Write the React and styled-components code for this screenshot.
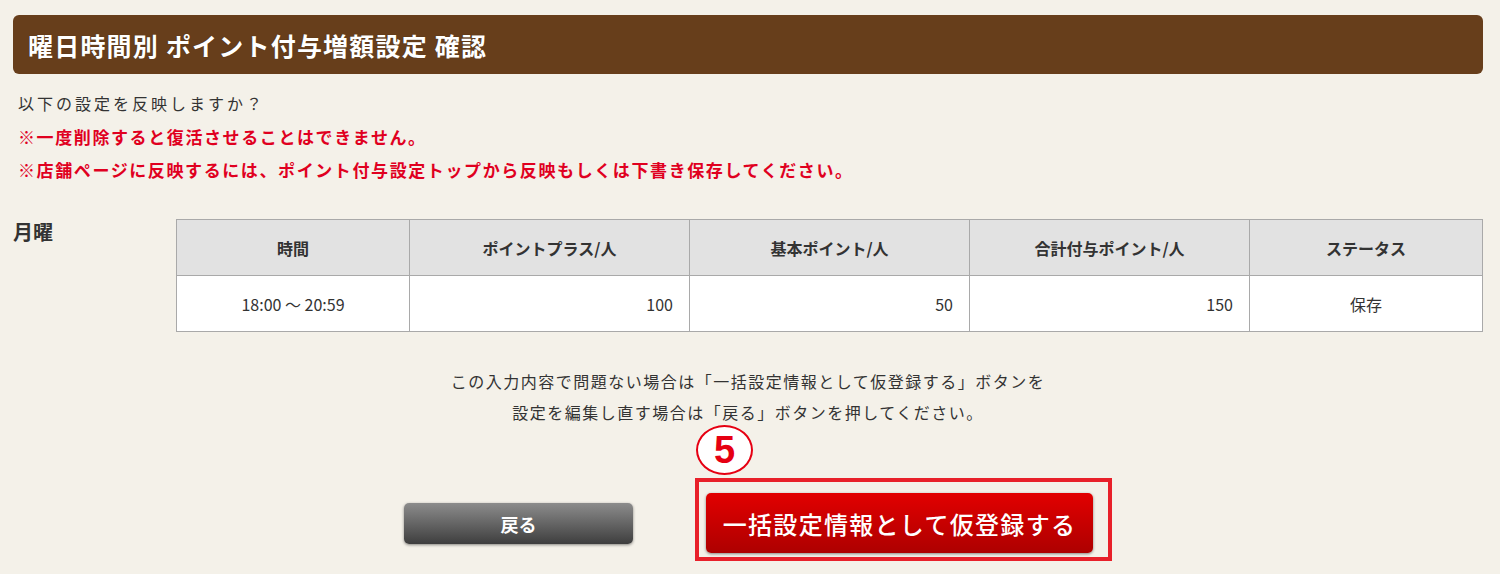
import React from "react";
import styled, { createGlobalStyle } from "styled-components";

const GlobalStyle = createGlobalStyle`
  body {
    margin: 0;
    background: #f4f1e9;
    font-family: "Noto Sans CJK JP", "Noto Sans", sans-serif;
    color: #333;
  }
`;

const Page = styled.div`
  padding: 15px 17px 0 13px;
  height: 574px;
  box-sizing: border-box;
`;

const TitleBar = styled.div`
  display: flex;
  align-items: center;
  height: 59px;
  padding-left: 15px;
  border-radius: 6px;
  background: #673e1b;
  color: #fff;
  font-size: 25px;
  font-weight: 700;
  letter-spacing: 1.2px;
  text-shadow: 0 0 1px rgba(0, 0, 0, 0.4);
`;

const Notice = styled.div`
  margin-top: 13px;
  padding-left: 5px;
`;

const NoticeLine = styled.div`
  height: 33px;
  line-height: 33px;
  font-size: ${(p) => (p.$alert ? "17px" : "16px")};
  font-weight: ${(p) => (p.$alert ? 700 : 400)};
  letter-spacing: ${(p) => (p.$alert ? "1.6px" : "3px")};
  color: ${(p) => (p.$alert ? "#e0001f" : "#333")};
  white-space: nowrap;
`;

const DayRow = styled.div`
  display: flex;
  margin-top: 33px;
`;

const DayLabel = styled.div`
  width: 163px;
  flex: none;
  padding-top: 1px;
  font-size: 20px;
  font-weight: 700;
  line-height: 24px;
  color: #333;
`;

const Table = styled.table`
  flex: 1;
  border-collapse: collapse;
  table-layout: fixed;
  background: #fff;
`;

const Th = styled.th`
  height: 55px;
  padding: 0;
  border: 1px solid #a9a9a9;
  background: #e2e2e2;
  font-size: 16px;
  font-weight: 700;
  color: #333;
  text-align: center;
`;

const Td = styled.td`
  height: 55px;
  padding: 0 ${(p) => (p.$align === "right" ? "16px" : "0")} 0 0;
  border: 1px solid #a9a9a9;
  font-size: 16px;
  color: #333;
  text-align: ${(p) => p.$align || "center"};
`;

const Info = styled.div`
  margin-top: 34px;
  text-align: center;
  font-size: 16px;
  letter-spacing: 1.5px;
  line-height: 31px;
  color: #333;
`;

const Actions = styled.div`
  display: flex;
  justify-content: center;
  align-items: flex-start;
  gap: 62px;
  margin-top: 50px;
  padding-left: 20px;
`;

const BaseButton = styled.button`
  border: none;
  border-radius: 5px;
  color: #fff;
  font-family: "Noto Sans CJK JP", "Noto Sans", sans-serif;
  cursor: pointer;
  box-shadow: 0 1px 3px rgba(0, 0, 0, 0.45);
`;

const BackButton = styled(BaseButton)`
  width: 229px;
  height: 41px;
  margin-top: 25px;
  background: linear-gradient(#8c8c8c, #3e3e3e);
  font-size: 18px;
  font-weight: 700;
`;

const Marked = styled.div`
  position: relative;
  padding: 11px 15px 4px 7px;
  border: 4px solid #e8202a;
`;

const StepBadge = styled.div`
  position: absolute;
  top: -57px;
  left: -3px;
  width: 57px;
  height: 50px;
  box-sizing: border-box;
  display: flex;
  align-items: center;
  justify-content: center;
  border: 2px solid #e60012;
  border-radius: 50%;
  background: #fff;
  color: #e60012;
  font-family: "Liberation Sans", Arial, sans-serif;
  font-size: 38px;
  font-weight: 700;
  line-height: 1;
`;

const SubmitButton = styled(BaseButton)`
  width: 387px;
  height: 60px;
  background: linear-gradient(#e20000, #ad0000);
  font-size: 24px;
  font-weight: 500;
  letter-spacing: 1.3px;
`;

const rows = [
  { time: "18:00 ～ 20:59", plus: 100, base: 50, total: 150, status: "保存" },
];

export default function App() {
  return (
    <>
      <GlobalStyle />
      <Page>
        <TitleBar>曜日時間別 ポイント付与増額設定 確認</TitleBar>
        <Notice>
          <NoticeLine>以下の設定を反映しますか？</NoticeLine>
          <NoticeLine $alert>※一度削除すると復活させることはできません。</NoticeLine>
          <NoticeLine $alert>
            ※店舗ページに反映するには、ポイント付与設定トップから反映もしくは下書き保存してください。
          </NoticeLine>
        </Notice>

        <DayRow>
          <DayLabel>月曜</DayLabel>
          <Table>
            <colgroup>
              <col style={{ width: 233 }} />
              <col style={{ width: 280 }} />
              <col style={{ width: 280 }} />
              <col style={{ width: 280 }} />
              <col />
            </colgroup>
            <thead>
              <tr>
                <Th>時間</Th>
                <Th>ポイントプラス/人</Th>
                <Th>基本ポイント/人</Th>
                <Th>合計付与ポイント/人</Th>
                <Th>ステータス</Th>
              </tr>
            </thead>
            <tbody>
              {rows.map((r) => (
                <tr key={r.time}>
                  <Td>{r.time}</Td>
                  <Td $align="right">{r.plus}</Td>
                  <Td $align="right">{r.base}</Td>
                  <Td $align="right">{r.total}</Td>
                  <Td>{r.status}</Td>
                </tr>
              ))}
            </tbody>
          </Table>
        </DayRow>

        <Info>
          この入力内容で問題ない場合は「一括設定情報として仮登録する」ボタンを
          <br />
          設定を編集し直す場合は「戻る」ボタンを押してください。
        </Info>

        <Actions>
          <BackButton>戻る</BackButton>
          <Marked>
            <StepBadge>5</StepBadge>
            <SubmitButton>一括設定情報として仮登録する</SubmitButton>
          </Marked>
        </Actions>
      </Page>
    </>
  );
}
